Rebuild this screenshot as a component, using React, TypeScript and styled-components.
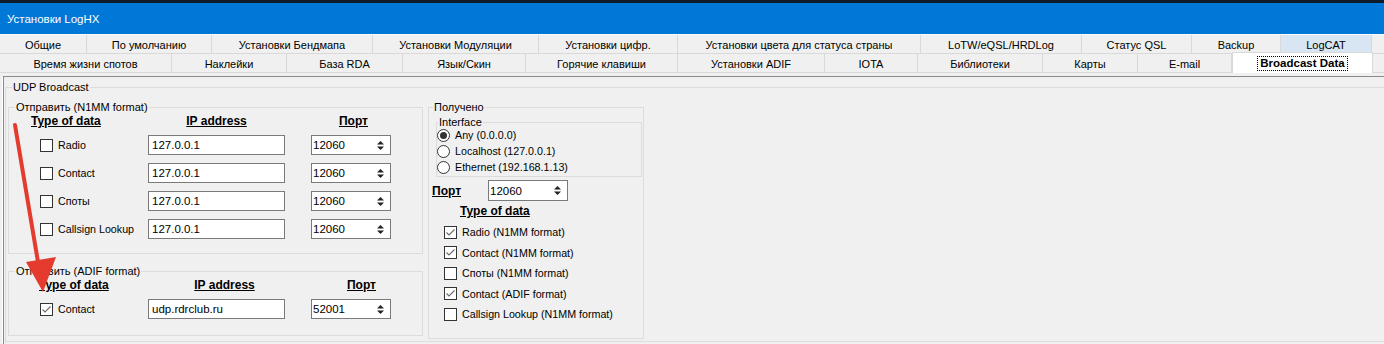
import * as React from 'react';
import styled, { createGlobalStyle, css } from 'styled-components';

const GlobalStyle = createGlobalStyle`
    body {
        margin: 0;
        background: #f0f0f0;
    }
`;

const Window = styled.div`
    position: relative;
    width: 1384px;
    height: 344px;
    overflow: hidden;
    background: #f0f0f0;
    font-family: 'Liberation Sans', Arial, sans-serif;
    font-size: 11px;
    color: #000;
`;

const TitleBar = styled.div`
    height: 31px;
    border-top: 3px solid #0d1b2a;
    background: #0078d7;
    color: #fff;
    font-size: 11.5px;
    display: flex;
    align-items: center;
    padding-left: 7px;
`;

const TabStrip = styled.div`
    display: flex;
    flex-direction: column;
`;

const TabRow = styled.div<{ $first?: boolean }>`
    display: flex;
    height: ${(p) => (p.$first ? 20 : 19)}px;
    box-sizing: border-box;
    border-top: ${(p) => (p.$first ? '1px solid #fbfbfb' : 'none')};
    border-bottom: 1px solid #d9d9d9;
`;

const Tab = styled.div<{ $w: number; $hover?: boolean; $active?: boolean }>`
    width: ${(p) => p.$w}px;
    box-sizing: border-box;
    display: flex;
    align-items: center;
    justify-content: center;
    padding-top: 2px;
    border-right: 1px solid #d9d9d9;
    background: ${(p) => (p.$hover ? '#d8e6f4' : '#f0f0f0')};
    white-space: nowrap;

    ${(p) =>
        p.$active &&
        css`
            position: relative;
            z-index: 1;
            margin-top: -2px;
            margin-bottom: -1px;
            padding-top: 0;
            background: #fff;
            border: 1px solid #d9d9d9;
            border-bottom: none;
            font-weight: bold;
            font-size: 11.5px;
        `}
`;

const FocusText = styled.span`
    outline: 1px dotted #000;
    padding: 0 2px;
    line-height: 13px;
`;

const Panel = styled.div`
    margin: 3px 0 0 3px;
    height: 268px;
    box-sizing: border-box;
    border-top: 1px solid #8a8a8a;
    border-left: 1px solid #8a8a8a;
    box-shadow: -2px 0 0 -1px #fff;
    padding: 3px 0 0 1px;
    font-size: 10.7px;
`;

const GroupBox = styled.fieldset<{ $w?: number }>`
    margin: 0;
    padding: 0;
    min-width: 0;
    box-sizing: border-box;
    border: 1px solid #dcdcdc;
    ${(p) => p.$w && `width: ${p.$w}px;`}
`;

const Legend = styled.legend<{ $x: number }>`
    margin-left: ${(p) => p.$x}px;
    padding: 0 1px;
    line-height: 14px;
    height: 14px;
    font-size: 11px;
`;

const UdpBox = styled(GroupBox)`
    border-right: none;
`;

const UdpBody = styled.div`
    display: flex;
    gap: 5px;
    padding: 6px 0 2px 2px;
`;

const LeftColumn = styled.div`
    display: flex;
    flex-direction: column;
    gap: 10px;
`;

const SendGrid = styled.div<{ $rows: number; $pad: number }>`
    display: grid;
    grid-template-columns: 139px 163px 80px;
    grid-template-rows: 17px repeat(${(p) => p.$rows}, 28px);
    align-items: center;
    padding-bottom: ${(p) => p.$pad}px;
`;

const Heading = styled.div<{ $center?: boolean; $pad?: number; $w?: number }>`
    align-self: start;
    line-height: 14px;
    font-weight: bold;
    text-decoration: underline;
    font-size: 12px;
    box-sizing: border-box;
    text-align: ${(p) => (p.$center ? 'center' : 'left')};
    padding-left: ${(p) => p.$pad ?? 0}px;
    ${(p) => p.$w && `width: ${p.$w}px;`}
`;

const PortHeading = styled(Heading)`
    align-self: center;
`;

const TypeHeading = styled(Heading)`
    margin-top: 3px;
`;

const CheckRow = styled.label<{ $pad: number }>`
    display: flex;
    align-items: center;
    gap: 5px;
    padding-left: ${(p) => p.$pad}px;
    white-space: nowrap;
`;

const Box = styled.span`
    width: 13px;
    height: 13px;
    box-sizing: border-box;
    border: 1px solid #333;
    background: #fff;
    display: inline-flex;
    flex: none;
`;

const RadioCircle = styled.span<{ $on?: boolean }>`
    width: 13px;
    height: 13px;
    box-sizing: border-box;
    border: 1px solid #333;
    border-radius: 50%;
    background: #fff;
    display: inline-flex;
    align-items: center;
    justify-content: center;
    flex: none;

    &::after {
        content: '';
        width: 7px;
        height: 7px;
        border-radius: 50%;
        background: ${(p) => (p.$on ? '#333' : 'transparent')};
    }
`;

const Field = styled.div`
    width: 137px;
    height: 20px;
    box-sizing: border-box;
    border: 1px solid #7a7a7a;
    background: #fff;
    display: flex;
    align-items: center;
    padding-left: 3px;
    font-size: 11.5px;
`;

const SpinField = styled(Field)<{ $h?: number }>`
    width: 80px;
    height: ${(p) => p.$h ?? 20}px;
    justify-content: space-between;
    padding: 0 6px 0 1px;
`;

const ReceiveBody = styled.div`
    display: flex;
    flex-direction: column;
    padding-bottom: 14px;
`;

const InterfaceBox = styled(GroupBox)`
    margin: 1px 1px 0 7px;
`;

const RadioList = styled.div`
    display: flex;
    flex-direction: column;
    margin-top: -2px;
    padding-bottom: 1px;
`;

const RadioRow = styled.label`
    height: 16px;
    display: flex;
    align-items: center;
    gap: 5px;
`;

const PortRow = styled.div`
    display: grid;
    grid-template-columns: 59px 80px;
    align-items: center;
    height: 21px;
    margin-top: 3px;
`;

const CheckList = styled.div`
    display: flex;
    flex-direction: column;
    margin-top: 4px;
`;

const ListRow = styled(CheckRow)<{ $h: number }>`
    height: ${(p) => p.$h}px;
`;

const Overlay = styled.svg`
    position: absolute;
    left: 0;
    top: 0;
    pointer-events: none;
`;

const row1 = [
    ['Общие', 87],
    ['По умолчанию', 125],
    ['Установки Бендмапа', 161],
    ['Установки Модуляции', 166],
    ['Установки цифр.', 139],
    ['Установки цвета для статуса страны', 243],
    ['LoTW/eQSL/HRDLog', 161],
    ['Статус QSL', 110],
    ['Backup', 89],
    ['LogCAT', 91],
] as const;

const row2 = [
    ['Время жизни спотов', 172],
    ['Наклейки', 115],
    ['База RDA', 116],
    ['Язык/Скин', 123],
    ['Горячие клавиши', 152],
    ['Установки ADIF', 147],
    ['IOTA', 93],
    ['Библиотеки', 125],
    ['Карты', 95],
    ['E-mail', 94],
] as const;

const CheckBox = ({ checked }: { checked?: boolean }) => (
    <Box>
        {checked && (
            <svg width="11" height="11" viewBox="0 0 11 11">
                <polyline points="1.5,5.5 4,8 9.5,2.5" fill="none" stroke="#6b6b6b" strokeWidth="1.1" />
            </svg>
        )}
    </Box>
);

const Spinner = ({ value, h }: { value: string; h?: number }) => (
    <SpinField $h={h}>
        <span>{value}</span>
        <svg width="7" height="9" viewBox="0 0 7 9">
            <polygon points="3.5,0 7,3.5 0,3.5" fill="#222" />
            <polygon points="0,5.5 7,5.5 3.5,9" fill="#222" />
        </svg>
    </SpinField>
);

const n1mm = ['Radio', 'Contact', 'Споты', 'Callsign Lookup'];

const received: [string, boolean, number][] = [
    ['Radio (N1MM format)', true, 20],
    ['Contact (N1MM format)', true, 21],
    ['Споты (N1MM format)', false, 20],
    ['Contact (ADIF format)', true, 21],
    ['Callsign Lookup (N1MM format)', false, 20],
];

// the ADIF group draws its column titles 8px further right than the N1MM one
const SendHeaders = ({ shift }: { shift: number }) => (
    <>
        <Heading $pad={22 + shift}>Type of data</Heading>
        <Heading $center $w={137} $pad={2 * shift}>
            IP address
        </Heading>
        <Heading $center $w={80} $pad={5 + 2 * shift}>
            Порт
        </Heading>
    </>
);

const App: React.FunctionComponent = () => {
    return (
        <Window>
            <GlobalStyle />
            <TitleBar>Установки LogHX</TitleBar>
            <TabStrip>
                <TabRow $first>
                    {row1.map(([name, w]) => (
                        <Tab key={name} $w={w} $hover={name === 'LogCAT'}>
                            {name}
                        </Tab>
                    ))}
                </TabRow>
                <TabRow>
                    {row2.map(([name, w]) => (
                        <Tab key={name} $w={w}>
                            {name}
                        </Tab>
                    ))}
                    <Tab $w={141} $active>
                        <FocusText>Broadcast Data</FocusText>
                    </Tab>
                </TabRow>
            </TabStrip>
            <Panel>
                <UdpBox>
                    <Legend $x={6}>UDP Broadcast</Legend>
                    <UdpBody>
                        <LeftColumn>
                            <GroupBox $w={415}>
                                <Legend $x={6}>Отправить (N1MM format)</Legend>
                                <SendGrid $rows={4} $pad={10}>
                                    <SendHeaders shift={0} />
                                    {n1mm.map((name) => (
                                        <React.Fragment key={name}>
                                            <CheckRow $pad={31}>
                                                <CheckBox />
                                                {name}
                                            </CheckRow>
                                            <Field>127.0.0.1</Field>
                                            <Spinner value="12060" />
                                        </React.Fragment>
                                    ))}
                                </SendGrid>
                            </GroupBox>
                            <GroupBox $w={415}>
                                <Legend $x={6}>Отправить (ADIF format)</Legend>
                                <SendGrid $rows={1} $pad={12}>
                                    <SendHeaders shift={8} />
                                    <CheckRow $pad={31}>
                                        <CheckBox checked />
                                        Contact
                                    </CheckRow>
                                    <Field>udp.rdrclub.ru</Field>
                                    <Spinner value="52001" />
                                </SendGrid>
                            </GroupBox>
                        </LeftColumn>
                        <GroupBox $w={216}>
                            <Legend $x={4}>Получено</Legend>
                            <ReceiveBody>
                                <InterfaceBox>
                                    <Legend $x={1}>Interface</Legend>
                                    <RadioList>
                                        <RadioRow>
                                            <RadioCircle $on />
                                            Any (0.0.0.0)
                                        </RadioRow>
                                        <RadioRow>
                                            <RadioCircle />
                                            Localhost (127.0.0.1)
                                        </RadioRow>
                                        <RadioRow>
                                            <RadioCircle />
                                            Ethernet (192.168.1.13)
                                        </RadioRow>
                                    </RadioList>
                                </InterfaceBox>
                                <PortRow>
                                    <PortHeading $pad={3}>Порт</PortHeading>
                                    <Spinner value="12060" h={21} />
                                </PortRow>
                                <TypeHeading $pad={31}>Type of data</TypeHeading>
                                <CheckList>
                                    {received.map(([name, on, h]) => (
                                        <ListRow key={name} $pad={15} $h={h}>
                                            <CheckBox checked={on} />
                                            {name}
                                        </ListRow>
                                    ))}
                                </CheckList>
                            </ReceiveBody>
                        </GroupBox>
                    </UdpBody>
                </UdpBox>
            </Panel>
            <Overlay width="1384" height="344">
                <line x1="15" y1="125" x2="38" y2="262" stroke="#e53a2e" strokeWidth="4" strokeLinecap="round" />
                <polygon points="26,262 56,257 43,292" fill="#e53a2e" />
            </Overlay>
        </Window>
    );
};

export default App;
